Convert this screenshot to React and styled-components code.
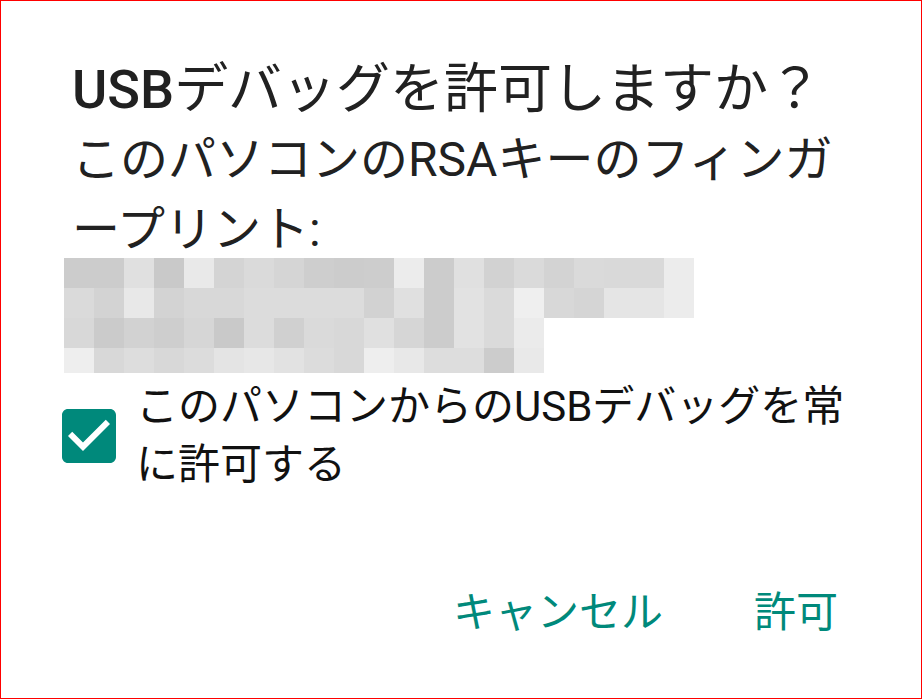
import React from "react";
import styled, { createGlobalStyle } from "styled-components";

const Global = createGlobalStyle`
  html, body { margin: 0; padding: 0; background: #ffffff; }
  * { box-sizing: border-box; }
`;

const TEAL = "#00897b";

const Frame = styled.div`
  width: 922px;
  height: 699px;
  border: 1px solid #ff0000;
  background: #ffffff;
  display: flex;
  flex-direction: column;
  padding: 54px 72px 0 71px;
  font-family: Roboto, "Noto Sans CJK JP", sans-serif;
`;

const Title = styled.h1`
  margin: 0;
  font-size: 54px;
  line-height: 70px;
  font-weight: 400;
  color: #212121;
  white-space: nowrap;
`;

const Latin = styled.span`
  font-weight: 500;
`;

const Message = styled.p`
  margin: 0;
  font-size: 48px;
  line-height: 70px;
  color: #212121;
  line-break: loose;
`;

const Pixels = styled.div`
  display: flex;
  flex-direction: column;
  margin: -7px 0 0 -8px;
`;

const PixelRow = styled.div`
  display: flex;
  height: ${(p) => p.$h}px;
`;

const Cell = styled.div`
  width: 30px;
  flex: none;
  background: ${(p) => p.$c};
`;

const CheckRow = styled.label`
  display: flex;
  align-items: center;
  gap: 20px;
  margin: 5px -22px 0 -10px;
`;

const Box = styled.svg`
  flex: none;
  width: 54px;
  height: 54px;
  display: block;
`;

const CheckLabel = styled.span`
  font-size: 42px;
  line-height: 58px;
  color: #111111;
`;

const Buttons = styled.div`
  display: flex;
  justify-content: flex-end;
  gap: 91px;
  margin: 90px 11px 0 0;
`;

const TextButton = styled.button`
  border: none;
  background: transparent;
  padding: 0;
  font-family: inherit;
  font-size: 42px;
  line-height: 58px;
  font-weight: 400;
  color: ${TEAL};
  cursor: pointer;
`;

const rows = [
  { h: 30, c: ["ccc", "ccc", "e0e0e0", "c9c9c9", "e9e9e9", "d4d4d4", "dadada", "d5d5d5", "cecece", "ccc", "cdcdcd", "ececec", "ccc", "e0e0e0", "d2d2d2", "dadada", "d3d3d3", "dadada", "d9d9d9", "d9d9d9", "ececec"] },
  { h: 30, c: ["dadada", "d3d3d3", "e8e8e8", "d3d3d3", "d8d8d8", "d8d8d8", "dcdcdc", "dcdcdc", "dcdcdc", "dcdcdc", "d2d2d2", "e0e0e0", "ccc", "e2e2e2", "dadada", "efefef", "d8d8d8", "d5d5d5", "e5e5e5", "e5e5e5", "ececec"] },
  { h: 30, c: ["d8d8d8", "cbcbcb", "d2d2d2", "cecece", "d6d6d6", "c9c9c9", "dcdcdc", "d0d0d0", "dadada", "d8d8d8", "e0e0e0", "d6d6d6", "ccc", "e2e2e2", "dadada", "ebebeb"] },
  { h: 25, c: ["eeeeee", "d8d8d8", "dddddd", "d8d8d8", "dcdcdc", "e4e4e4", "e7e7e7", "e2e2e2", "dcdcdc", "d8d8d8", "eeeeee", "e8e8e8", "dddddd", "dddddd", "ccc", "e9e9e9"] },
];

export default function App() {
  return (
    <>
      <Global />
      <Frame>
        <Title>
          <Latin>USB</Latin>デバッグを許可しますか？
        </Title>
        <Message>このパソコンのRSAキーのフィンガープリント:</Message>
        <Pixels>
          {rows.map((r, ri) => (
            <PixelRow key={ri} $h={r.h}>
              {r.c.map((c, ci) => (
                <Cell key={ci} $c={`#${c}`} />
              ))}
            </PixelRow>
          ))}
        </Pixels>
        <CheckRow>
          <Box viewBox="3 3 18 18" aria-hidden="true">
            <path
              fill={TEAL}
              d="M19 3H5c-1.11 0-2 .9-2 2v14c0 1.1.89 2 2 2h14c1.11 0 2-.9 2-2V5c0-1.1-.89-2-2-2zm-9 14l-5-5 1.41-1.41L10 14.17l7.59-7.59L19 8l-9 9z"
            />
          </Box>
          <CheckLabel>このパソコンからのUSBデバッグを常に許可する</CheckLabel>
        </CheckRow>
        <Buttons>
          <TextButton>キャンセル</TextButton>
          <TextButton>許可</TextButton>
        </Buttons>
      </Frame>
    </>
  );
}
